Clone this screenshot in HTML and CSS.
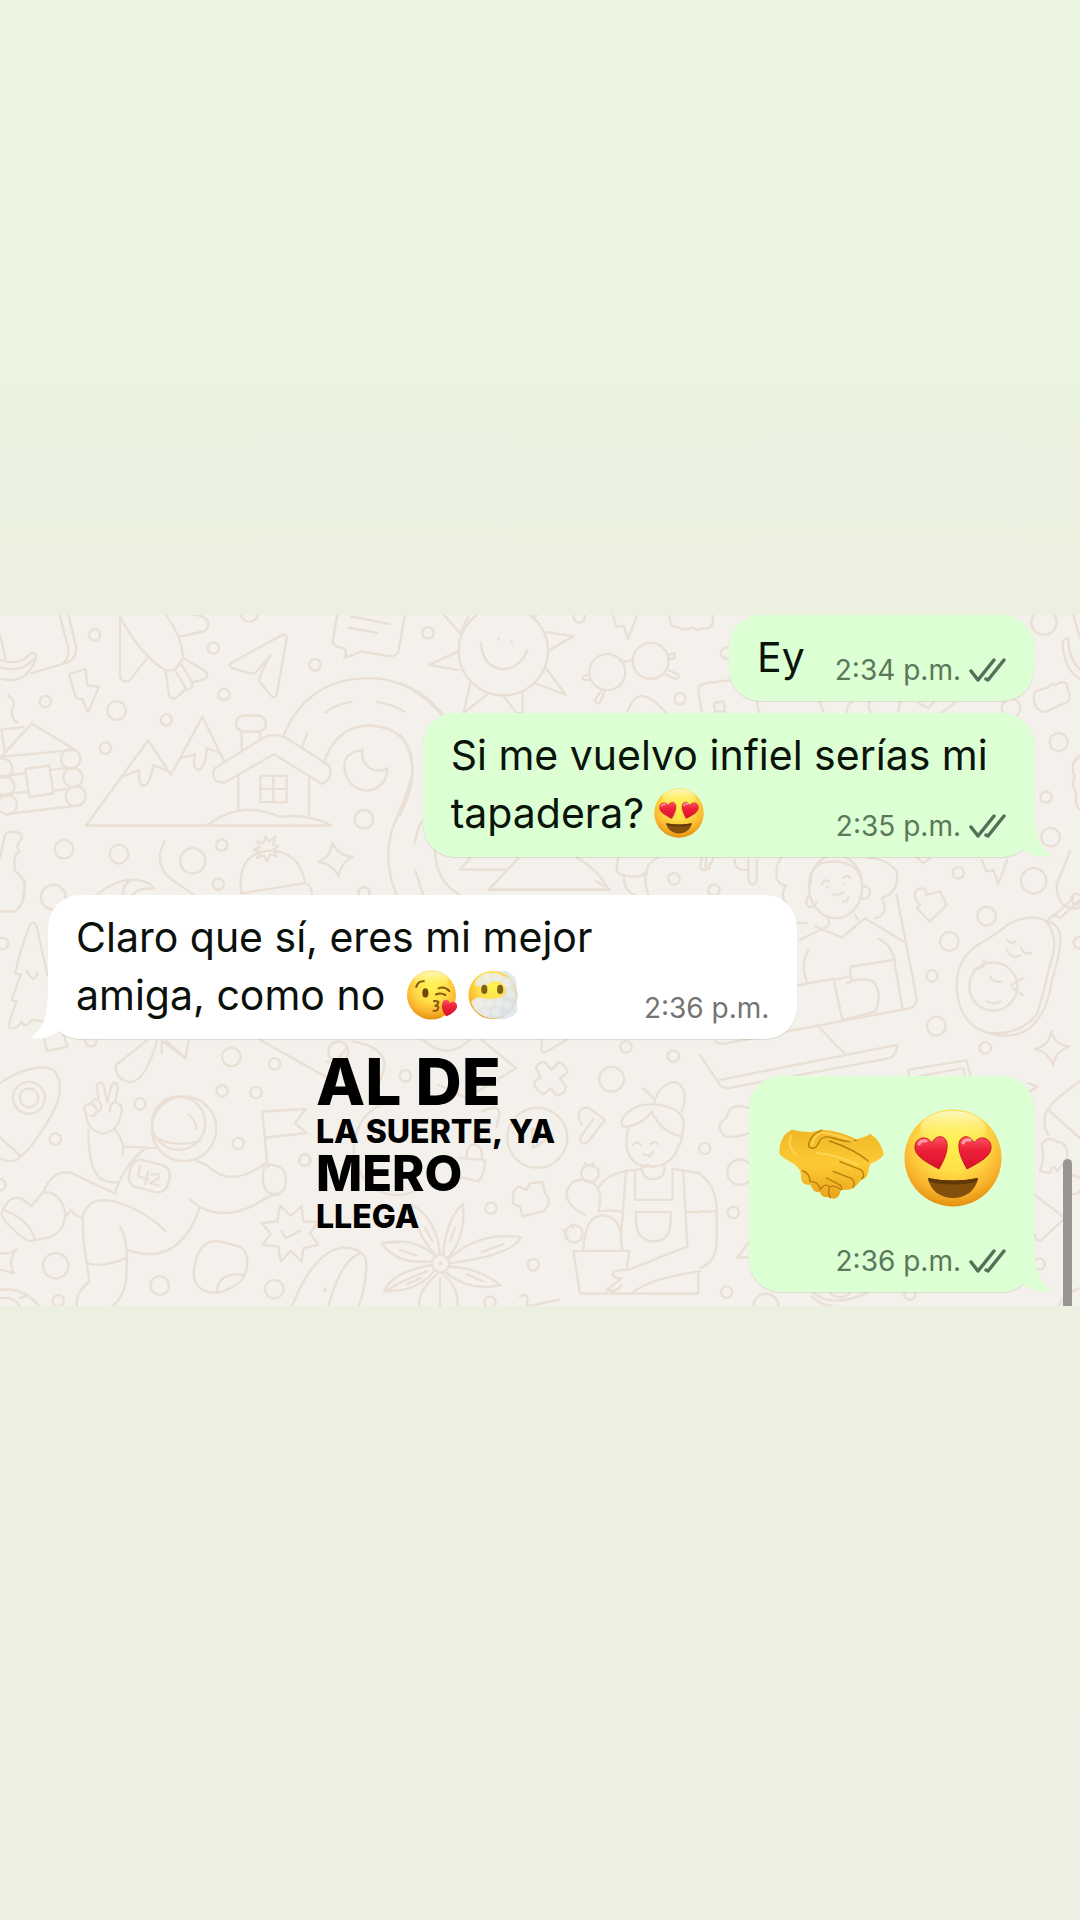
FILE: index.html
```html
<!DOCTYPE html>
<html lang="es">
<head>
<meta charset="utf-8">
<meta name="viewport" content="width=device-width, initial-scale=1">
<title>Chat</title>
<link rel="stylesheet" href="styles.css">
</head>
<body>
<svg class="defs" aria-hidden="true">
  <defs>
    <radialGradient id="face" cx=".5" cy=".32" r=".68">
      <stop offset="0" stop-color="#fff34f"/><stop offset=".45" stop-color="#fee04a"/><stop offset=".78" stop-color="#fbb62f"/><stop offset="1" stop-color="#e3920f"/>
    </radialGradient>
    <linearGradient id="shine" x1="0" y1="0" x2="0" y2="1">
      <stop offset="0" stop-color="#fffbd0" stop-opacity=".9"/><stop offset="1" stop-color="#fff34f" stop-opacity="0"/>
    </linearGradient>
    <linearGradient id="heart" x1="0" y1="0" x2="0" y2="1">
      <stop offset="0" stop-color="#fb5563"/><stop offset=".4" stop-color="#ee2138"/><stop offset="1" stop-color="#d80f2c"/>
    </linearGradient>
    <linearGradient id="skin" x1="0" y1="0" x2="0" y2="1">
      <stop offset="0" stop-color="#f0b726"/><stop offset=".5" stop-color="#fdca34"/><stop offset="1" stop-color="#e9a41c"/>
    </linearGradient>
    <linearGradient id="cloud" x1="0" y1="0" x2="1" y2="1">
      <stop offset="0" stop-color="#f3ecc8"/><stop offset=".5" stop-color="#e6e7df"/><stop offset="1" stop-color="#d3dde4"/>
    </linearGradient>
    <symbol id="heart-eyes" viewBox="0 0 98 98">
      <circle cx="49" cy="49" r="48.500" fill="url(#face)"/>
      <ellipse cx="49" cy="20" rx="33" ry="18" fill="url(#shine)"/>
      <path d="M35 60C22 53 10 47 11 37C12 28 23 26 28 34C31 26 42 25 43 35C44 43 39 53 35 60Z" fill="url(#heart)" stroke="#c91b22" stroke-width="1"/>
      <path d="M63 60C59 53 54 43 55 35C56 25 67 26 70 34C75 26 86 28 87 37C88 47 76 53 63 60Z" fill="url(#heart)" stroke="#c91b22" stroke-width="1"/>
      <path d="M15 35Q17 31 22 32M59 34Q61 30 66 31" fill="none" stroke="#ff9ca4" stroke-width="3" stroke-linecap="round"/>
      <path d="M24 69Q49 74 74 69C72 82 61 89 49 89C37 89 26 82 24 69Z" fill="#83500c"/>
      <path d="M24 69Q49 74 74 69L73 73Q49 78 25 73Z" fill="#613908"/>
    </symbol>
    <symbol id="ticks" viewBox="0 0 37 24">
      <path d="M2 13L9 22L25 2M17 21L19 22L35 2" fill="none" stroke="currentColor" stroke-width="3.500" stroke-linecap="round" stroke-linejoin="round"/>
    </symbol>
    <symbol id="tail" viewBox="0 0 40 60">
      <path d="M22 0C22 34 24 47 40 59C29 61 18 58 11 52L0 50V0Z" fill="currentColor"/>
    </symbol>
  </defs>
</svg>

<main class="chat">
  <svg class="wallpaper" viewBox="0 0 1080 692" preserveAspectRatio="xMidYMid slice" aria-hidden="true">
    <!-- mountains, cabin, rocket, rainbow -->
    <g transform="translate(0 -13) scale(.3333)">
      <path d="M176 30L205 140Q208 180 180 190L95 215M203 30L228 135Q232 165 205 183L180 190M0 175Q60 195 92 156Q110 150 107 172Q85 235 30 236L0 232M0 198Q60 215 100 175M0 100L18 175"/>
      <path d="M360 45V225Q364 245 388 238L440 172M360 45Q420 160 497 207L525 205L550 170Q545 100 495 38M540 105L610 90Q632 80 622 55Q605 40 580 40M497 207L507 280Q515 297 530 288L558 262M525 205L558 262Q575 268 578 245L545 190Q530 190 525 205M550 170L615 208Q630 220 615 232L580 242"/>
      <path d="M850 98Q862 98 860 112L830 280Q825 292 815 284L778 240Q772 232 812 162L765 215Q758 220 698 200Q680 190 698 182ZM1012 38L998 120Q1000 135 1030 140Q1045 150 1033 170L1085 150L1165 164Q1190 165 1195 150L1215 40M1055 45L1170 68M1045 78L1132 94"/>
      <path d="M207 218L257 203L262 252L297 256L268 325Q262 335 258 320L248 294L228 290ZM25 282Q50 300 38 320Q28 345 52 364M0 385L70 376M5 385L14 455L95 366L225 445L0 466M14 455L0 470M0 525L78 515M155 505L195 500M0 580L85 570M160 568L200 562M20 638L235 612M76 502L148 492L160 576L88 587Z"/>
      <circle cx="212" cy="472" r="29"/><circle cx="219" cy="528" r="29"/><circle cx="227" cy="584" r="30"/><circle cx="8" cy="500" r="29"/><circle cx="14" cy="555" r="29"/><circle cx="22" cy="610" r="29"/>
      <path d="M258 672L444 417L513 520L607 346L672 478M258 672H995Q920 635 840 646Q720 595 625 670M372 524L418 506Q412 550 432 552Q450 550 460 490L510 512M545 470L585 458Q575 505 598 505Q618 495 620 440L660 455"/>
      <path d="M645 500L780 415Q820 390 860 410L985 490Q1005 530 965 547L822 458L675 543Q635 545 640 512ZM715 528V625M927 530V638M725 390V450M780 390V412"/>
      <rect x="708" y="342" width="90" height="48" rx="24"/><path d="M781 523H860V602H781ZM820 523V602M781 562H860"/>
      <path d="M850 405Q920 230 1110 230Q1230 230 1331 345M970 485Q1010 372 1110 372Q1240 380 1238 510Q1230 560 1190 650Q1140 760 1190 880M975 333Q1010 308 1053 302M1132 302Q1180 310 1212 330M905 440L922 395M1088 445Q1020 455 1036 515Q1055 570 1110 567Q1160 555 1162 500Q1135 515 1110 500Q1080 475 1088 445Z"/>
      <path d="M998 724Q1015 765 1058 765Q1020 785 1017 825Q995 785 955 782Q990 770 998 724ZM724 876Q710 760 800 748Q900 745 915 845Q930 845 936 878M724 876L915 845M494 720Q455 790 520 838L582 880M290 880Q350 830 410 835Q450 840 462 860Q410 860 395 882M370 880Q365 850 395 836M15 700Q20 688 50 692Q70 695 64 715Q45 730 58 750Q36 765 46 810Q80 830 72 870L68 900M15 700L0 770"/>
      <path d="M772 720L778 737L760 745L783 752L770 770L792 762L802 780L810 758L830 764L820 745L835 733L818 730L826 706L805 720L797 704L790 724Z"/>
      <circle cx="284" cy="100" r="17"/><circle cx="136" cy="300" r="17"/><circle cx="350" cy="327" r="28"/><circle cx="499" cy="355" r="17"/><circle cx="316" cy="440" r="17"/><circle cx="640" cy="140" r="17"/><circle cx="672" cy="279" r="17"/><circle cx="748" cy="35" r="26"/><circle cx="945" cy="190" r="17"/><circle cx="1092" cy="653" r="28"/><circle cx="192" cy="743" r="28"/><circle cx="357" cy="758" r="28"/><circle cx="578" cy="778" r="38"/><circle cx="665" cy="731" r="17"/><circle cx="655" cy="848" r="17"/><circle cx="160" cy="887" r="37"/><circle cx="1092" cy="874" r="17"/>
    </g>
    <!-- sun, glasses and the row above the first bubbles -->
    <g transform="translate(400 -13) scale(.3333)">
      <circle cx="310" cy="148" r="134"/><path d="M242 122Q250 205 315 203Q365 195 381 147M296 112V114M335 120V122M130 38L180 95L205 45M400 50L412 38M440 92L520 104L445 148M438 200L497 280L408 246M212 242L190 335L260 280M310 282L350 335L368 335V272M178 148L88 190L175 205"/>
      <circle cx="622" cy="212" r="54"/><circle cx="752" cy="178" r="54"/><path d="M674 180L698 175M570 220Q545 220 548 232Q560 240 573 232M605 265L585 295Q590 315 602 300L614 267M803 162Q830 148 824 168Q815 175 806 170M805 205L835 220Q840 235 820 230L792 215M637 38L650 75L672 74L684 112L712 40M810 38Q805 80 835 78Q855 90 875 78Q890 90 905 80Q945 90 938 40M680 335Q700 280 730 284Q760 290 800 335M905 335L895 265Q895 248 920 245L990 236M942 305L970 300L975 330H945ZM0 245Q80 275 132 345M0 400Q75 500 0 640M45 725Q50 680 70 655M105 745Q105 840 180 880M45 805L70 880M210 770L180 804H315M355 770L267 864H627Q590 800 530 768M655 770Q640 820 670 820Q740 840 745 790L770 770M672 822Q670 870 705 880M740 815Q730 835 745 880M905 770Q895 810 915 806Q930 795 940 770"/>
      <circle cx="84" cy="94" r="17"/><circle cx="538" cy="46" r="17"/><circle cx="840" cy="292" r="17"/><circle cx="980" cy="155" r="17"/><circle cx="822" cy="832" r="17"/><circle cx="941" cy="866" r="17"/>
    </g>
    <!-- right edge above the laptop -->
    <g transform="translate(720 -13) scale(.3333)">
      <circle cx="972" cy="62" r="38"/><circle cx="873" cy="320" r="28"/><circle cx="1016" cy="422" r="27"/><circle cx="978" cy="587" r="17"/><circle cx="992" cy="707" r="28"/>
      <path d="M1060 40L1080 110M1045 110Q1020 110 1032 160Q1045 215 1080 232M1045 110Q1045 170 1080 205M945 270Q935 290 950 320Q970 335 980 330L1045 300Q1055 290 1038 245Q1020 238 1010 250Q990 245 985 258ZM1080 462Q1045 490 1065 525Q1050 550 1070 575Q1062 610 1080 625M110 300L118 335M300 300L312 335M380 335Q380 310 395 302M450 300Q440 320 455 335M540 300L535 335M595 305L625 320L640 302M705 305L660 335"/>
    </g>
    <!-- astronaut, rocket, tree, sticker -->
    <g transform="translate(0 267) scale(.3333)">
      <path d="M142 280L110 135Q102 115 90 130Q65 190 45 275L62 280L35 355L50 360Q20 435 30 440Q50 445 65 420Q75 445 95 415L140 420M80 268Q100 310 112 275M133 470L140 508L202 496L190 455M470 480Q440 590 395 602Q350 600 346 552L440 478M488 480L556 530L566 480M500 480L556 530M485 480V515M0 605Q100 540 160 565Q200 610 160 690Q100 800 50 835Q20 845 0 830M0 768L60 822M780 475L985 590M1060 480Q1170 500 1150 570L1140 600M980 540Q1000 550 1020 525L1040 500"/>
      <circle cx="87" cy="649" r="48"/><circle cx="87" cy="649" r="28"/><circle cx="1015" cy="510" r="30"/>
      <circle cx="552" cy="742" r="97"/><circle cx="536" cy="725" r="80"/><path d="M460 765Q520 800 600 780M565 698Q588 715 590 742"/>
      <path d="M365 692Q355 750 310 756Q260 750 257 690Q245 675 260 670Q280 662 290 682Q290 705 272 703M275 665Q285 640 302 665Q308 690 290 690M295 650L290 615Q300 590 312 615L322 662M322 662L335 610Q350 595 354 620L345 662M330 690Q330 665 345 662Q370 670 365 692M265 745Q265 860 300 890Q320 905 355 902M345 745Q375 780 368 820M370 795L470 800M440 798Q370 850 345 936L215 875Q160 860 130 932L93 975Q40 915 5 992Q0 1015 70 1070Q90 1085 105 1075Q200 1070 195 990Q180 930 132 932M10 985Q90 1015 105 1075M195 1010L212 985Q225 1005 250 1010M585 836L620 850Q690 925 795 845M570 955Q670 1040 805 945L835 940M795 845Q780 900 800 930Q830 950 855 920Q870 855 815 850ZM790 690L918 682L885 725L920 755L798 768M787 690L803 858M600 975Q540 1160 380 1105M260 1145Q245 1060 250 1000Q270 940 350 962Q430 985 497 1048M360 1035Q385 1080 380 1145L378 1200Q370 1250 335 1276M260 1145Q310 1160 378 1130M260 1145L268 1200Q220 1240 232 1276"/>
      <rect x="388" y="842" width="120" height="84" rx="32" transform="rotate(14 448 884)"/>
      <path d="M420 855L415 885L445 892M445 870L435 908M455 880Q480 872 475 890L450 905L475 912"/>
      <path d="M840 972L872 1003L905 973L910 1020L955 1022L930 1055L955 1090L910 1100L905 1140L872 1108L842 1140L835 1095L788 1090L812 1057L785 1025L832 1020ZM845 1050L858 1070L900 1048M660 1080L720 1096Q745 1110 742 1150Q735 1200 700 1215Q650 1245 615 1228Q570 1210 585 1150Q600 1070 660 1080ZM650 1232Q655 1170 730 1180M875 1276Q940 1110 1030 1098Q1110 1100 1098 1170Q1095 1230 1075 1276M985 1276Q1020 1140 1080 1115M1145 1085Q1190 1150 1280 1140M1155 1230Q1200 1200 1280 1170M1145 1085L1200 1082M0 1115Q30 1120 50 1103Q20 1140 42 1175L0 1165M0 1225Q70 1215 120 1276M0 1250Q45 1245 60 1276M75 0Q75 80 40 90H0M60 1250L85 1240"/>
      <circle cx="8" cy="186" r="17"/><circle cx="273" cy="478" r="17"/><circle cx="694" cy="526" r="28"/><circle cx="824" cy="547" r="17"/><circle cx="420" cy="667" r="17"/><circle cx="666" cy="628" r="17"/><circle cx="768" cy="633" r="17"/><circle cx="166" cy="773" r="17"/><circle cx="715" cy="786" r="17"/><circle cx="914" cy="836" r="17"/><circle cx="0" cy="910" r="17"/><circle cx="167" cy="1153" r="38"/><circle cx="479" cy="1212" r="28"/><circle cx="823" cy="1223" r="28"/><circle cx="175" cy="1258" r="17"/><circle cx="975" cy="1225" r="3"/>
    </g>
    <!-- flower, gardener with cactus -->
    <g transform="translate(300 267) scale(.3333)">
      <path d="M565 25L930 25L890 0M565 25L590 0M370 475Q440 540 510 475M545 475L648 560L500 650L415 610M725 475V505Q725 520 740 510L800 475M755 565L775 542Q795 545 803 572L780 592L798 615Q795 640 770 642L752 620L732 638Q705 630 702 600L722 588L708 560Q715 540 735 542ZM845 730L835 700Q845 670 870 682L915 715L865 780Q840 795 840 770L880 712"/>
      <circle cx="712" cy="769" r="90"/><path d="M695 740L745 770L700 800ZM545 690L580 678Q600 680 598 700L590 735M480 830L555 835Q555 880 535 900L470 885M500 830Q500 785 525 790Q550 795 545 832"/>
      <path d="M260 665A130 140 0 1 0 360 920M640 930L655 915L680 925L690 905L728 902L735 935Q750 950 745 970L730 990L668 1005L660 975Q630 970 640 945Z"/>
      <circle cx="422" cy="1146" r="26"/><circle cx="422" cy="1146" r="3"/>
      <path d="M405 1120Q340 1040 335 970Q410 1010 420 1118M430 1118Q440 1010 488 968Q500 1060 445 1128M445 1135Q530 1050 663 1067Q640 1120 450 1145M447 1155Q540 1160 602 1212Q500 1230 435 1170M425 1174Q480 1220 472 1276M415 1174Q350 1230 358 1276M403 1168Q350 1235 252 1228Q280 1170 395 1150M398 1140Q290 1150 245 1085Q340 1065 405 1122M420 1190V1276M300 1105L350 1122M545 1112L610 1088M320 1208L362 1190M465 1040L450 1080M375 1040L398 1080M500 1178L550 1200"/>
      <path d="M660 1245Q690 1230 680 1275M680 1275L775 1255M985 735Q965 830 1020 850Q1060 860 1085 850Q1130 830 1135 790M985 735Q1040 720 1055 690Q1080 750 1145 765M985 735Q950 740 975 700Q1010 665 1060 668Q1140 675 1152 720Q1150 750 1140 790M1060 670Q1080 600 1130 602Q1170 630 1145 690M1030 620L1060 650M1000 790Q1010 775 1022 790M1052 788Q1065 775 1075 788M1030 818L1050 825L1060 810M1045 850L1025 860Q1030 895 1060 893Q1100 890 1092 850M1025 862L980 868Q915 880 895 920M1005 865V955H1118V862L1200 875M978 870L962 1080M1150 868L1162 1095L985 1165M1008 992H1112V1020Q1110 1080 1060 1080Q1010 1075 1008 1020ZM850 1105Q855 1000 910 1002Q970 1005 965 1105M820 1108H988L980 1165M820 1108L840 1236H1195V1180M985 1165Q935 1165 938 1180Q950 1195 965 1190Q935 1215 920 1225Q950 1235 965 1210M995 1236Q1050 1190 1200 1170M855 1000Q795 970 800 930Q820 880 870 900Q915 920 895 990M1160 992H1200M900 990Q930 985 962 990"/>
      <circle cx="870" cy="876" r="26"/><circle cx="822" cy="1057" r="26"/><path d="M855 845L860 855M880 845L876 855M900 860L892 866M790 1045L800 1050M795 1070L803 1064M815 1030L818 1040"/>
      <circle cx="978" cy="496" r="17"/><circle cx="1120" cy="524" r="17"/><circle cx="935" cy="593" r="37"/><circle cx="316" cy="583" r="17"/><circle cx="573" cy="980" r="17"/><circle cx="700" cy="1150" r="17"/><circle cx="15" cy="836" r="17"/><circle cx="570" cy="1262" r="17"/><circle cx="192" cy="35" r="17"/>
    </g>
    <!-- laptop, avocado, crown -->
    <g transform="translate(700 237) scale(.3333)">
      <ellipse cx="407" cy="105" rx="80" ry="95"/><path d="M332 100Q325 30 400 30Q480 30 487 100M330 130Q310 150 325 165Q345 170 350 150M485 105Q510 100 510 125Q505 145 482 140M365 100Q372 80 385 90M430 80Q440 65 450 80M400 128Q415 135 430 122M430 150Q445 150 445 138M382 105V107M434 95V97M245 18Q225 40 230 80Q240 105 260 100Q235 130 265 165Q240 200 300 215L320 215M505 20Q560 20 590 60Q600 120 545 140Q570 190 525 200M385 195L387 222L300 265M345 225L427 258L495 200L610 270M465 190L475 205M590 130L650 440Q650 465 630 470L260 540M537 262Q585 290 585 340L607 470M325 295Q300 340 320 390M290 402L400 382L427 502M405 385L445 375M455 385Q445 345 455 345L580 325M440 395Q480 375 520 390Q550 430 525 480L430 505M355 525L435 608M0 610L60 700Q70 712 95 708L570 620Q590 610 592 580L60 685M45 570Q60 580 80 575L250 545M660 160Q630 130 655 112Q680 105 680 130L720 120L740 160L690 210L650 170ZM845 25L860 60L880 55L895 98L922 25"/>
      <path d="M1040 210Q1000 185 930 215Q900 240 860 265Q770 310 770 400Q770 490 830 530Q920 575 990 530Q1045 480 1055 390Q1090 280 1078 240Q1070 215 1040 210ZM1040 212Q1080 260 1050 340Q1030 430 1010 490Q960 550 870 545"/><circle cx="880" cy="405" r="72"/><path d="M820 355L850 345L852 325M940 410L968 430M935 400L970 380M870 375Q880 395 905 390M860 450Q880 460 902 450M920 265Q935 280 947 270M965 290Q970 310 992 305M920 295Q935 325 960 312M1040 210L1060 190L1080 200L1140 145M1065 190L1120 140M1110 0L1070 100Q1070 165 1115 170Q1130 175 1140 165M1140 130A16 16 0 1 0 1140 155"/>
      <path d="M1054 540Q1065 580 1108 585Q1065 600 1060 642Q1045 600 1005 592Q1045 585 1054 540ZM627 675L625 655L800 626L812 675M655 675L790 650L795 675M985 695L1012 705L990 720M1140 690Q1050 750 1035 790Q1030 830 1045 850M1045 775L1140 860M1025 880Q1045 850 1070 870Q1110 875 1100 925L1070 960Q1060 930 1050 965L1020 960Q1035 925 1025 880M1005 1030L1095 1100L1025 1165Q1010 1175 1005 1150M145 770Q85 750 80 800Q40 820 75 855Q110 860 145 845M0 970Q50 1000 50 1080L50 1170Q50 1230 0 1250M0 1080H50M145 1175L112 1218H145M340 1325Q400 1370 500 1325M335 1335Q360 1360 400 1365M390 1325Q420 1350 450 1325M1075 1367Q1090 1325 1140 1310M20 20Q10 60 30 50M105 25Q100 60 145 55M145 25V85Q155 110 170 90V25M650 18L670 35L690 20"/>
      <circle cx="775" cy="64" r="17"/><circle cx="1001" cy="88" r="38"/><circle cx="860" cy="194" r="28"/><circle cx="748" cy="270" r="28"/><circle cx="696" cy="373" r="17"/><circle cx="709" cy="524" r="28"/><circle cx="856" cy="589" r="17"/><circle cx="14" cy="891" r="17"/><circle cx="120" cy="962" r="38"/><circle cx="100" cy="1083" r="17"/><circle cx="80" cy="1322" r="17"/><circle cx="198" cy="1365" r="38"/><circle cx="1120" cy="1000" r="28"/><circle cx="1018" cy="1238" r="17"/><circle cx="42" cy="116" r="17"/><circle cx="1138" cy="274" r="17"/><circle cx="630" cy="1328" r="17"/>
    </g>
  </svg>

  <ol class="messages">
    <li class="message sent short">
      <p class="text">Ey</p>
      <p class="meta"><time datetime="14:34">2:34 p.m.</time><svg class="ticks" role="img" aria-label="Entregado"><use href="#ticks"/></svg></p>
    </li>
    <li class="message sent long">
      <p class="text">Si me vuelvo infiel serías mi<br>tapadera?<svg class="emoji spaced" role="img" aria-label="😍"><use href="#heart-eyes"/></svg></p>
      <p class="meta"><time datetime="14:35">2:35 p.m.</time><svg class="ticks" role="img" aria-label="Entregado"><use href="#ticks"/></svg></p>
      <svg class="tail" aria-hidden="true"><use href="#tail"/></svg>
    </li>
    <li class="message received">
      <p class="text">Claro que sí, eres mi mejor<br>amiga, como no
        <svg class="emoji spaced" role="img" aria-label="😘" viewBox="0 0 98 98">
          <circle cx="48" cy="49" r="48" fill="url(#face)"/>
          <ellipse cx="48" cy="20" rx="33" ry="17" fill="url(#shine)"/>
          <ellipse cx="36" cy="45" rx="6" ry="9" fill="#72460a"/>
          <path d="M18 33Q22 21 33 22M62 36Q73 31 83 41M57 48Q66 44 75 49M53 61Q65 60 60 67Q57 70 54 70Q65 70 60 78Q57 81 52 80" fill="none" stroke="#8a570f" stroke-width="4" stroke-linecap="round"/>
          <path d="M77 91C70 82 66 73 70 63C74 55 83 58 84 65C90 59 100 64 98 73C96 81 86 87 77 91Z" fill="url(#heart)"/>
        </svg>
        <svg class="emoji" role="img" aria-label="😶‍🌫️" viewBox="0 0 98 98">
          <path d="M54 4Q76 -3 86 10Q98 18 95 36Q101 50 95 64Q102 88 82 92Q70 101 55 94Z" fill="#e2e9ed"/>
          <circle cx="48" cy="49" r="47" fill="url(#face)"/>
          <path d="M30 8Q50 1 70 12Q86 16 89 29Q98 47 92 64Q87 86 66 92Q46 100 26 88Q10 80 6 62Q17 50 29 55Q47 60 67 52Q79 44 70 29Q60 19 44 25Q30 37 13 30Q14 16 30 8Z" fill="url(#cloud)"/>
          <g fill="#fff" opacity=".25"><circle cx="38" cy="15" r="8"/><circle cx="57" cy="15" r="8"/><circle cx="76" cy="26" r="8"/><circle cx="84" cy="48" r="8"/><circle cx="22" cy="67" r="9"/><circle cx="42" cy="66" r="8"/><circle cx="61" cy="65" r="9"/><circle cx="78" cy="69" r="8"/><circle cx="34" cy="83" r="8"/><circle cx="55" cy="83" r="8"/></g>
          <ellipse cx="32" cy="38" rx="6" ry="9" fill="#80601b"/><ellipse cx="63" cy="38" rx="6" ry="9" fill="#80601b"/>
        </svg></p>
      <p class="meta"><time datetime="14:36">2:36 p.m.</time></p>
      <svg class="tail" aria-hidden="true"><use href="#tail"/></svg>
    </li>
    <li class="last-row">
      <p class="caption"><strong class="line xl">AL DE</strong><strong class="line">LA SUERTE, YA</strong><strong class="line lg">MERO</strong><strong class="line">LLEGA</strong></p>
      <div class="message sent reaction">
        <p class="big-emojis">
          <svg class="handshake" role="img" aria-label="🤝" viewBox="114 144 314 210">
            <path d="M152 146Q180 152 210 154L242 146Q300 150 345 175Q370 170 388 159Q420 180 428 220Q415 240 390 247Q382 260 381 275Q378 292 362 295Q350 310 338 320Q320 330 298 326Q297 350 278 353Q265 352 258 348Q240 350 237 334Q215 335 208 311Q180 315 179 285Q183 270 160 250Q130 235 115 220Q112 165 152 146Z" fill="url(#skin)"/>
            <g fill="none" stroke-linecap="round">
              <path d="M345 178Q330 188 275 171Q240 160 232 187Q220 210 202 197Q202 165 242 147M296 242L358 266Q375 278 362 294M276 271L330 292Q345 305 335 320M256 291L298 313Q305 322 298 327M381 240Q340 205 265 180M184 270Q205 275 207 302Q230 300 238 325Q250 305 265 317Q280 312 295 323M264 320Q260 340 268 350" stroke="#b77d0b" stroke-width="4"/>
              <path d="M213 190Q216 165 242 155Q290 158 340 184M225 215Q285 220 350 252M150 165Q135 195 165 220" stroke="#ffdc60" stroke-width="6" opacity=".7"/>
            </g>
          </svg>
          <svg class="heart-eyes" role="img" aria-label="😍"><use href="#heart-eyes"/></svg>
        </p>
        <p class="meta"><time datetime="14:36">2:36 p.m.</time><svg class="ticks" role="img" aria-label="Entregado"><use href="#ticks"/></svg></p>
        <svg class="tail" aria-hidden="true"><use href="#tail"/></svg>
      </div>
    </li>
  </ol>
  <div class="scroll-thumb" aria-hidden="true"></div>
</main>
</body>
</html>
```
FILE: styles.css
```css
* {
  box-sizing: border-box;
}

body {
  margin: 0;
  min-height: 100vh;
  display: flex;
  flex-direction: column;
  justify-content: center;
  font-family: Inter, "Liberation Sans", sans-serif;
  color: #0b100b;
  background: linear-gradient(#ebf3e1 0%, #ebf3e1 20%, #ecf0e0 30%, #edf0e2 100%);
}

p,
ol {
  margin: 0;
  padding: 0;
}

.defs {
  position: absolute;
  width: 0;
  height: 0;
}

.chat {
  position: relative;
  overflow: hidden;
  background: #f4f0eb;
}

.wallpaper {
  position: absolute;
  inset: 0;
  width: 100%;
  height: 100%;
  fill: none;
  stroke: #e9dfd4;
  stroke-width: 7;
  stroke-linecap: round;
  stroke-linejoin: round;
}

.messages {
  position: relative;
  display: flex;
  flex-direction: column;
  padding: 0 46px 14px 48px;
  list-style: none;
}

.message {
  position: relative;
  display: grid;
  padding: 13px 28px 15px;
  border-radius: 32px;
  box-shadow: 0 1px 1px rgba(80, 70, 50, 0.14);
}

.sent {
  align-self: flex-end;
  color: #0a140a;
  background: #dcffd4;
}

.received {
  align-self: flex-start;
  width: 76%;
  margin-top: 38px;
  background: #fff;
}

.short {
  grid-template-columns: auto auto;
  column-gap: 30px;
}

.long {
  min-width: 62%;
  margin-top: 12px;
}

.text,
.long .meta,
.received .meta {
  grid-row: 1;
}

.long .text,
.long .meta,
.received .text,
.received .meta {
  grid-column: 1;
}

.text {
  font-size: 41px;
  line-height: 58px;
}

.meta {
  display: flex;
  align-items: center;
  align-self: end;
  justify-self: end;
  gap: 8px;
  font-size: 28px;
  line-height: 32px;
  color: #5b785b;
}

.received .meta {
  color: #747474;
}

.ticks {
  width: 37px;
  height: 24px;
  color: #53705a;
}

.tail {
  position: absolute;
  right: -18px;
  bottom: 0;
  width: 40px;
  height: 60px;
  color: #dcffd4;
}

.received .tail {
  right: auto;
  left: -18px;
  color: #fff;
  transform: scaleX(-1);
}

.emoji {
  width: 50px;
  height: 50px;
  vertical-align: -10px;
}

.spaced {
  margin-left: 10px;
}

.last-row {
  display: flex;
  justify-content: space-between;
  align-items: flex-start;
  margin-top: 12px;
}

.caption {
  margin-left: 268px;
  color: #000;
}

.line {
  display: block;
  font-size: 32px;
  font-weight: 800;
  line-height: 37px;
}

.lg {
  font-size: 49px;
  line-height: 48px;
}

.xl {
  font-size: 64px;
  line-height: 62px;
}

.reaction {
  margin-top: 25px;
  row-gap: 38px;
  padding-top: 33px;
}

.big-emojis {
  display: flex;
  align-items: center;
  gap: 20px;
  padding: 0 4px 0 2px;
}

.handshake {
  width: 105px;
  height: 70px;
  margin-top: 12px;
}

.heart-eyes {
  width: 98px;
  height: 98px;
}

.scroll-thumb {
  position: absolute;
  right: 8px;
  bottom: 0;
  width: 9px;
  height: 147px;
  border-radius: 5px 5px 0 0;
  background: #999593;
}
```
